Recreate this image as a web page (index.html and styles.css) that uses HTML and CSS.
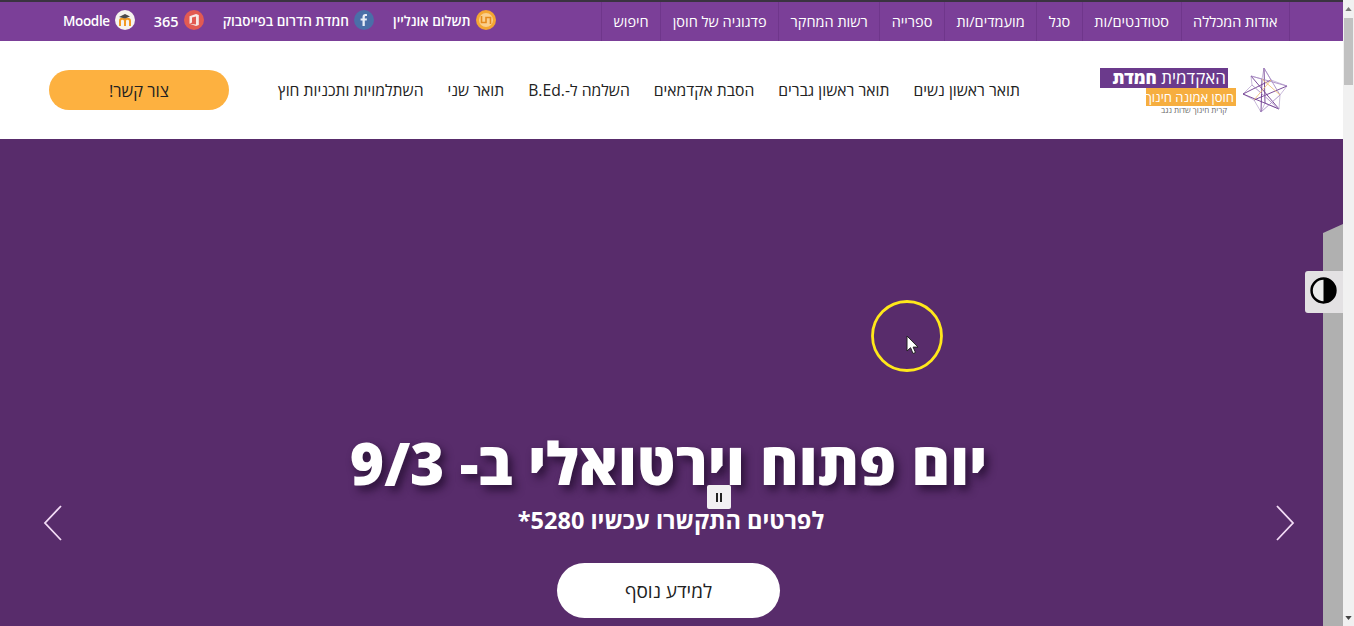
FILE: index.html
```html
<!DOCTYPE html>
<html lang="he">
<head>
<meta charset="utf-8">
<title>האקדמית חמדת</title>
<link rel="stylesheet" href="styles.css">
</head>
<body>
<div class="window">
  <div class="page" dir="rtl">
    <div class="topbar">
      <nav class="topnav">
        <a class="topnav-item">אודות המכללה</a>
        <a class="topnav-item">סטודנטים/ות</a>
        <a class="topnav-item">סגל</a>
        <a class="topnav-item">מועמדים/ות</a>
        <a class="topnav-item">ספרייה</a>
        <a class="topnav-item">רשות המחקר</a>
        <a class="topnav-item">פדגוגיה של חוסן</a>
        <a class="topnav-item">חיפוש</a>
      </nav>
      <div class="quick">
        <a class="quick-item">
          <svg class="quick-icon" viewBox="0 0 20 20"><circle cx="10" cy="10" r="10" fill="#f5a632"/><circle cx="10" cy="10" r="7" fill="#fbcf8c"/><path d="M5.500 6v6.500h4.500V8M14.500 14V7.500H10V12" fill="none" stroke="#e58a1c" stroke-width="1.600"/></svg>
          <span>תשלום אונליין</span>
        </a>
        <a class="quick-item">
          <svg class="quick-icon" viewBox="0 0 20 20"><circle cx="10" cy="10" r="10" fill="#4a6fa8"/><path d="M10.800 16v-5.400h1.900l.3-2.200h-2.200V7.200c0-.7.2-1.100 1.100-1.100H13V4.200c-.3 0-.9-.1-1.700-.1-1.700 0-2.800 1-2.800 2.900v1.400H6.600v2.200h1.900V16z" fill="#e8eef7"/></svg>
          <span>חמדת הדרום בפייסבוק</span>
        </a>
        <a class="quick-item">
          <svg class="quick-icon" viewBox="0 0 20 20"><circle cx="10" cy="10" r="10" fill="#e25a52"/><path d="M5.500 6.200 12 4l2.800 1v10L12 16l-6.500-2.200L12 14.500V6.500L8 7.500v5l-2.500 1.300z" fill="#f7e9e6"/></svg>
          <span class="quick-num">365</span>
        </a>
        <a class="quick-item">
          <svg class="quick-icon" viewBox="0 0 20 20"><circle cx="10" cy="10" r="10" fill="#f6f3ee"/><path d="M5 16v-5c0-1.500 1-2.200 2.200-2.200S10 9.500 10 11v5M10 16v-5c0-1.500 1-2.200 2.300-2.200S15 9.500 15 11v5" fill="none" stroke="#f39a21" stroke-width="2"/><path d="M4 7l6-3 5 2.500-5 2z" fill="#4a4a4a"/></svg>
          <span class="quick-latin">Moodle</span>
        </a>
      </div>
    </div>

    <header class="mainhead">
      <div class="logo">
        <svg class="logo-star" viewBox="0 0 46 46">
          <g fill="none" stroke-width=".9" stroke-linejoin="round">
            <path d="M22 1 29 13 45 19 38 28 37 42 23 36 19 45 12 33 1 27 10 18 9 9 20 12Z" stroke="#c3b2d6"/>
            <path d="M22 1 23 36M45 19 12 33M37 42 9 9M1 27 29 13M19 45 20 12M1 27 37 42" stroke="#6d3a8e"/>
            <path d="M9 9 45 19M22 1 38 28M19 45 38 28M10 18 37 42" stroke="#a98cc4"/>
            <path d="M12 33 29 13M20 12 38 28" stroke="#f0c27a"/>
          </g>
        </svg>
        <div class="logo-text">
          <div class="logo-name">האקדמית <b>חמדת</b></div>
          <div class="logo-tag">חוסן אמונה חינוך</div>
          <div class="logo-place">קרית חינוך שדות נגב</div>
        </div>
      </div>
      <nav class="mainnav">
        <a>תואר ראשון נשים</a>
        <a>תואר ראשון גברים</a>
        <a>הסבת אקדמאים</a>
        <a>השלמה ל-.B.Ed</a>
        <a>תואר שני</a>
        <a>השתלמויות ותכניות חוץ</a>
      </nav>
      <a class="contact">צור קשר!</a>
    </header>

    <main class="hero">
      <h1 class="hero-title">יום פתוח וירטואלי ב- 9/3</h1>
      <p class="hero-sub">לפרטים התקשרו עכשיו 5280*</p>
      <a class="hero-btn">למידע נוסף</a>

      <button class="pause" aria-label="השהה"><span></span><span></span></button>
      <svg class="arrow arrow-next" viewBox="0 0 20 38"><path d="M2 2 18 19 2 36" fill="none" stroke="#f3dcf6" stroke-width="1.800"/></svg>
      <svg class="arrow arrow-prev" viewBox="0 0 20 38"><path d="M18 2 2 19 18 36" fill="none" stroke="#f3dcf6" stroke-width="1.800"/></svg>
      <div class="side-panel"></div>
      <button class="contrast" aria-label="ניגודיות">
        <svg viewBox="0 0 26 26"><circle cx="13" cy="13" r="11.500" fill="#ececec" stroke="#000" stroke-width="2.400"/><path d="M13 1.500a11.500 11.500 0 0 1 0 23z" fill="#000"/></svg>
      </button>
      <svg class="cursor-ring" viewBox="0 0 72 72"><circle cx="36" cy="36" r="34.500" fill="none" stroke="#ffe81a" stroke-width="2.800"/></svg>
      <svg class="cursor-arrow" viewBox="0 0 13 20"><path d="M1 1v15l3.600-3.300L7 18.500l2.500-1-2.400-5.400H12z" fill="#fff" stroke="#222" stroke-width="1"/></svg>
    </main>
  </div>

  <div class="scrollbar">
    <div class="scroll-btn"><svg viewBox="0 0 8 5"><path d="M4 0 8 5H0z" fill="#777"/></svg></div>
    <div class="scroll-track"><div class="scroll-thumb"></div></div>
    <div class="scroll-btn"><svg viewBox="0 0 8 5"><path d="M0 0h8L4 5z" fill="#444"/></svg></div>
  </div>
</div>
</body>
</html>
```

FILE: styles.css
```css
* { box-sizing: border-box; }
html, body { margin: 0; height: 100%; overflow: hidden; }
body { font-family: "Open Sans", "Liberation Sans", "DejaVu Sans", sans-serif; }

.window { display: flex; height: 626px; width: 1354px; }
.page { width: 1343px; display: flex; flex-direction: column; height: 626px; }

.topbar {
  height: 41px;
  flex: none;
  border-top: 2px solid #3a3340;
  background: #7b3f98;
  display: flex;
  justify-content: space-between;
  padding: 0 53px 0 63px;
  color: #fff;
}
.topnav { display: flex; border-right: 1px solid #6f368b; border-left: 1px solid #6f368b; }
.topnav-item {
  display: flex;
  align-items: center;
  padding: 0 11.500px;
  font-size: 14.500px;
  border-left: 1px solid #6f368b;
  white-space: nowrap;
}
.topnav-item:last-child { border-left: 0; }
.quick { display: flex; align-items: center; gap: 19px; margin-top: -3px; }
.quick-item { display: flex; align-items: center; gap: 5px; font-size: 13.500px; font-weight: 600; white-space: nowrap; }
.quick-item span { margin-top: 2px; }
.quick-num { font-size: 14.500px; }
.quick-latin { letter-spacing: -.35px; }
.quick-icon { width: 20px; height: 20px; flex: none; }

.mainhead {
  height: 98px;
  flex: none;
  background: #fff;
  display: flex;
  align-items: center;
  padding: 0 55px 0 49px;
}
.logo { display: flex; align-items: flex-start; width: 188px; gap: 6px; flex: none; }
.logo-star { width: 46px; height: 46px; flex: none; }
.logo-text { display: flex; flex-direction: column; align-items: flex-start; color: #fff; padding-top: 1px; }
.logo-name {
  background: #6b3a8c;
  font-size: 17px;
  line-height: 20px;
  width: 128px;
  padding: 0 2px;
  margin-right: 8px;
  font-weight: 400;
  white-space: nowrap;
}
.logo-name b { font-weight: 800; }
.logo-tag {
  background: #f6ae3f;
  font-size: 13px;
  line-height: 18px;
  width: 90px;
  padding: 0 2px;
  white-space: nowrap;
}
.logo-place { color: #6a6a6a; font-size: 8px; line-height: 8px; margin-right: 9px; white-space: nowrap; }

.mainnav { flex: 1; display: flex; justify-content: flex-start; gap: 24px; padding: 0 80px 0 0; font-size: 15.700px; color: #222; white-space: nowrap; }
.contact {
  width: 180px;
  height: 40px;
  border-radius: 20px;
  background: #fdb140;
  color: #222;
  font-size: 16.500px;
  font-weight: 500;
  display: flex;
  align-items: center;
  justify-content: center;
  flex: none;
}

.hero {
  flex: 1;
  position: relative;
  background: #582c6b;
  display: flex;
  flex-direction: column;
  align-items: center;
  color: #fff;
  overflow: hidden;
  padding: 291px 6px 0 0;
}
.hero-title {
  margin: 0;
  font-size: 58.700px;
  line-height: 64px;
  font-weight: 800;
  white-space: nowrap;
  text-shadow: 4px 5px 8px rgba(30, 10, 40, .75);
}
.hero-sub { margin: 11px 0 0 5px; font-size: 23.500px; line-height: 30px; font-weight: 700; }
.hero-btn {
  margin-top: 28px;
  width: 223px;
  height: 55px;
  border-radius: 28px;
  background: #fff;
  color: #222;
  font-size: 19px;
  display: flex;
  align-items: center;
  justify-content: center;
}

.pause {
  position: absolute;
  left: 707px;
  top: 346px;
  width: 24px;
  height: 24px;
  padding: 0;
  border: 0;
  border-radius: 2px;
  background: #f2f0f3;
  display: flex;
  align-items: center;
  justify-content: center;
  gap: 2px;
}
.pause span { width: 2px; height: 9px; background: #222; }

.arrow { position: absolute; top: 365px; width: 20px; height: 38px; }
.arrow-next { left: 1275px; }
.arrow-prev { left: 43px; }

.side-panel {
  position: absolute;
  right: 0;
  top: 85px;
  bottom: 0;
  width: 20px;
  background: #b0b0b0;
  clip-path: polygon(0 9px, 100% 0, 100% 100%, 0 100%);
}
.contrast {
  position: absolute;
  right: 0;
  top: 132px;
  width: 38px;
  height: 42px;
  padding: 0 6px 3px 5px;
  border: 0;
  border-radius: 3px 0 0 3px;
  background: #e3e1e3;
  display: flex;
  align-items: center;
}
.contrast svg { width: 27px; height: 27px; }

.cursor-ring { position: absolute; left: 871px; top: 161px; width: 72px; height: 72px; }
.cursor-arrow { position: absolute; left: 906px; top: 196px; width: 13px; height: 20px; }

.scrollbar { width: 11px; flex: none; display: flex; flex-direction: column; background: #f1f1f1; }
.scroll-btn { height: 17px; display: flex; align-items: center; justify-content: center; flex: none; }
.scroll-btn svg { width: 7px; height: 4px; }
.scroll-track { flex: 1; padding: 1px; }
.scroll-thumb { height: 67px; background: #c1c1c1; }
```
